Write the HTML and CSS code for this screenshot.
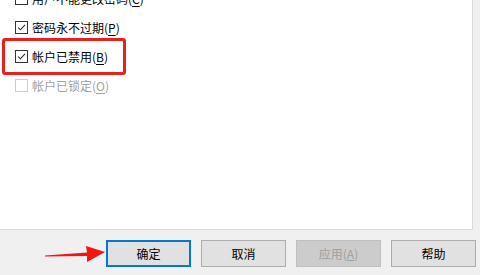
FILE: index.html
```html
<!DOCTYPE html>
<html lang="zh-CN">
<head>
<meta charset="utf-8">
<link rel="stylesheet" href="styles.css">
</head>
<body>
<div class="panel">
  <div class="opts">
    <div class="row"><span class="cb"></span><span class="lbl">用户不能更改密码(<u>C</u>)</span></div>
    <div class="row"><span class="cb"><svg viewBox="0 0 13 13"><path d="M2.5 6.5 L5.2 9.3 L10.6 3.4" fill="none" stroke="#222" stroke-width="1.2"/></svg></span><span class="lbl">密码永不过期(<u>P</u>)</span></div>
    <div class="row"><span class="cb"><svg viewBox="0 0 13 13"><path d="M2.5 6.5 L5.2 9.3 L10.6 3.4" fill="none" stroke="#222" stroke-width="1.2"/></svg></span><span class="lbl">帐户已禁用(<u>B</u>)</span></div>
    <div class="row disabled"><span class="cb"></span><span class="lbl">帐户已锁定(<u>O</u>)</span></div>
  </div>
  <div class="highlight"></div>
</div>
<div class="buttons">
  <button class="btn default">确定</button>
  <button class="btn">取消</button>
  <button class="btn off">应用(<u>A</u>)</button>
  <button class="btn">帮助</button>
</div>
<svg class="arrow" width="70" height="24" viewBox="0 0 70 24">
  <polygon points="0,11.5 42,8.5 41,2 60,8 42,18 42,12 0,12.5" fill="#f2160f"/>
</svg>
</body>
</html>
```
FILE: styles.css
```css
html, body {
  margin: 0;
  padding: 0;
}
body {
  width: 480px;
  height: 275px;
  background: #f0f0f0;
  font-family: "Noto Sans CJK SC", "Microsoft YaHei", sans-serif;
  font-size: 12px;
  color: #000;
  position: relative;
  overflow: hidden;
}
.panel {
  position: relative;
  width: 473px;
  height: 230px;
  background: #fff;
  border-right: 1px solid #dadada;
  border-bottom: 1px solid #dadada;
  box-sizing: border-box;
  overflow: hidden;
}
.opts {
  display: flex;
  flex-direction: column;
  gap: 16px;
  padding-left: 15px;
  margin-top: -8px;
}
.row {
  display: flex;
  align-items: center;
  height: 13px;
}
.cb {
  width: 13px;
  height: 13px;
  box-sizing: border-box;
  border: 1px solid #333;
  background: #fff;
  flex: none;
  display: block;
}
.cb svg {
  display: block;
  width: 11px;
  height: 11px;
}
.lbl {
  margin-left: 4px;
  line-height: 16px;
  white-space: nowrap;
}
.lbl u {
  text-decoration-thickness: 1px;
  text-underline-offset: 2px;
}
.disabled .cb {
  border-color: #cccccc;
}
.disabled .lbl {
  color: #a0a0a0;
}
.highlight {
  position: absolute;
  left: 2px;
  top: 38px;
  width: 124px;
  height: 37px;
  box-sizing: border-box;
  border: 3px solid #e8211a;
  border-radius: 3px;
}
.buttons {
  display: flex;
  justify-content: flex-end;
  gap: 10px;
  padding-right: 4px;
  margin-top: 10px;
}
.btn {
  width: 85px;
  height: 27px;
  box-sizing: border-box;
  border: 1px solid #adadad;
  background: #e1e1e1;
  font-family: inherit;
  font-size: 12px;
  color: #000;
  padding: 0;
  margin: 0;
}
.btn.default {
  border: 2px solid #0078d7;
}
.btn.off {
  background: #cccccc;
  border-color: #bfbfbf;
  color: #a0a0a0;
}
.arrow {
  position: absolute;
  left: 45px;
  top: 244px;
}
```
